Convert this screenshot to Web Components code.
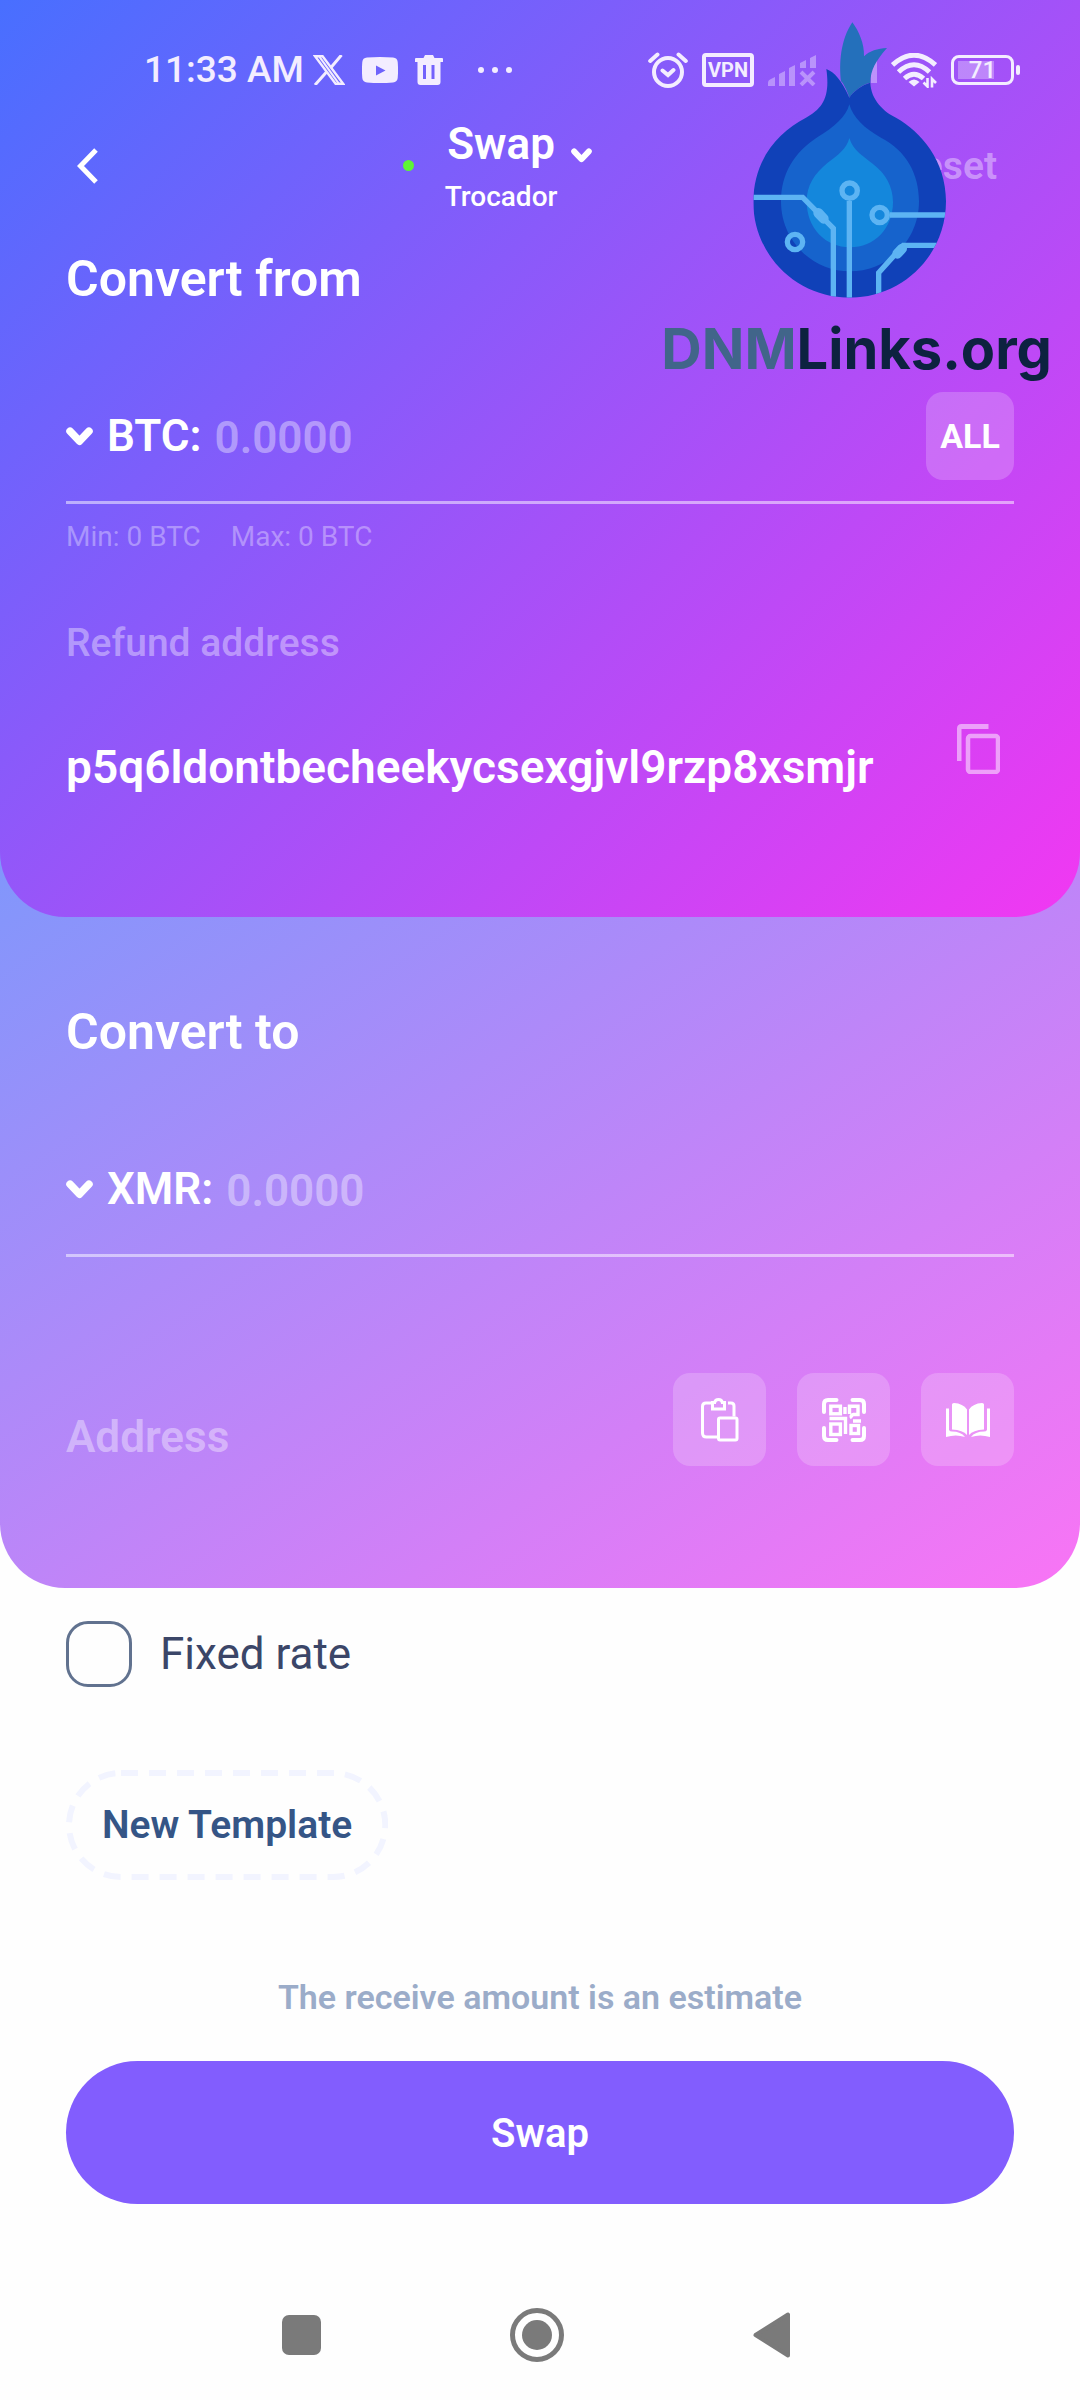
<!DOCTYPE html>
<html lang="en">
<head>
<meta charset="utf-8">
<meta name="viewport" content="width=device-width, initial-scale=1">
<title>Swap</title>
<style>
    :root {
        --gutter: 66px;
        --faint: rgba(255, 255, 255, 0.4);
        --line: rgba(255, 255, 255, 0.5);
        --tile: rgba(255, 255, 255, 0.2);
        --primary: #825dfe;
    }

    body {
        margin: 0;
        position: relative;
        background: #fefefe;
        color: #fff;
        font-family: Roboto, "Liberation Sans", sans-serif;
        font-size: 44px;
        line-height: 52px;
        font-weight: 500;
    }
</style>
</head>
<body>
    <swap-page></swap-page>
    <site-badge></site-badge>

<script>
const ICONS = {
    x: ['32', '30', '<path fill="none" stroke="currentColor" stroke-width="2.4" d="M2 1.2h7.6l20.6 27.6h-7.6z"/><path fill="none" stroke="currentColor" stroke-width="2" d="M6 1.2L26 28.8"/><path fill="none" stroke="currentColor" stroke-width="3" d="M28.5 0L18 12.5M13.5 17L2 30"/>'],
    youtube: ['36', '26', '<path fill="currentColor" fill-rule="evenodd" d="M5 .6Q18-.6 31 .6 35.4 1 35.7 5 36.4 13 35.7 21 35.400 25 31 25.400 18 26.600 5 25.400.6 25 .3 21-.4 13 .3 5 .6 1 5 .6zM14 8.500v10l9.500-5z"/>'],
    trash: ['28', '30', '<path fill="currentColor" fill-rule="evenodd" d="M10 0h8l1.500 3H27q1 0 1 1v3H0V4q0-1 1-1h7.500zM2.500 7h23V27q0 3-3 3h-17q-3 0-3-3zM8 10v14h3V10zm8.500 0v14h3V10z"/>'],
    dots: ['34', '6', '<g fill="currentColor"><circle cx="3" cy="3" r="3"/><circle cx="17" cy="3" r="3"/><circle cx="31" cy="3" r="3"/></g>'],
    alarm: ['40', '36', '<g fill="none" stroke="currentColor" stroke-width="4" stroke-linecap="round"><circle cx="20" cy="20" r="14"/><path d="M14.500 18.500l5.500 4.500 5.500-5M2.200 9L9.500 2.500M37.800 9l-7.300-6.500"/></g>'],
    signal: ['48', '31', '<g fill="currentColor"><path d="M0 31v-3q0-3 3-4l4-2v9zM11 31V19l6-3v15zM21 31V13l6-3v21zM32 13V8l6-3v8zM42 13V3l6-3v13z"/></g><path stroke="currentColor" stroke-width="4" d="M33 17l13 13M46 17L33 30"/>'],
    bar: ['6', '26', '<path fill="currentColor" d="M0 26V3l6-3v26z"/>'],
    wifi: ['46', '35', '<g fill="none" stroke="currentColor" stroke-width="5"><path d="M1.500 12Q23-7.500 44.500 12M7.500 19Q23 4.500 38.500 19M13.500 25.500Q23 17 32.500 25.500"/></g><path fill="currentColor" d="M17.500 29q5.500-5 11 0L23 33.500z"/><path fill="none" stroke="currentColor" stroke-width="2.600" d="M36.500 25v8.500l-4-4M41 34.500V26l4 4"/>'],
    back: ['32', '36', '<path fill="none" stroke="currentColor" stroke-width="5" d="M30 2L14.500 18 30 34"/>'],
    down: ['27', '19', '<path fill="none" stroke="currentColor" stroke-width="7.500" stroke-linecap="round" stroke-linejoin="round" d="M4 4.200l9.500 10 9.500-10"/>'],
    copy: ['43', '50', '<path fill="currentColor" d="M4.500 0H31.500V5H4.500V37H0V4.500Q0 0 4.500 0z"/><rect x="11" y="12" width="30" height="36" rx="2.500" fill="none" stroke="currentColor" stroke-width="4.500"/>'],
    paste: ['38', '44', '<g fill="none" stroke="currentColor" stroke-width="3"><path d="M11 5H5Q1.500 5 1.500 8.500V35q0 4 4 4h11M27 5h3q3 0 3 3v10.500"/><path d="M11.500 4.500v6.500h12V4.500h-2.200q-.6-3-3.800-3t-3.800 3z"/><rect x="17.500" y="20" width="18.500" height="22" rx="1.500"/></g>'],
    scan: ['44', '44', '<g fill="none" stroke="currentColor" stroke-width="4" stroke-linecap="round"><path d="M2 14V6q0-4 4-4h8.500M30.500 2H38q4 0 4 4v8M42 30v8q0 4-4 4h-7.500M14.500 42H6q-4 0-4-4v-8"/></g><g fill="none" stroke="currentColor" stroke-width="3.400"><rect x="8.800" y="8.200" width="9.600" height="7.600"/><path d="M23 9v7M7.500 20.500h16V36M27.500 16V8.200H36v8.300h-4.500q-4 1-1.500 3.500M31 23h8"/><rect x="8.800" y="26" width="9.600" height="10.500"/><rect x="29" y="27.500" width="7.500" height="8"/></g>'],
    book: ['44', '34', '<path fill="currentColor" d="M6 1.500Q6 0 8 0 17 .5 21 6.500V32Q17 27 6 26.500zM38 1.500Q38 0 36 0 27 .5 23 6.500V32q4-5 15-5.500zM0 5.500h3V27q1 1.500 3 1.500 9 0 13 5.500Q10 31 0 34zM44 5.500h-3V27q-1 1.500-3 1.500-9 0-13 5.500 9-3 19 0z"/>'],
    recents: ['39', '40', '<rect width="39" height="40" rx="7" fill="currentColor"/>'],
    home: ['54', '54', '<circle cx="27" cy="27" r="24.500" fill="none" stroke="currentColor" stroke-width="5"/><circle cx="27" cy="27" r="15" fill="currentColor"/>'],
    prev: ['37', '46', '<path fill="currentColor" stroke="currentColor" stroke-width="4" stroke-linejoin="round" d="M35 2.500v41L2.500 23z"/>']
};

// shared by every shadow root
const RESET = `
    button, input {
        margin: 0;
        padding: 0;
        border: 0;
        background: none;
        color: inherit;
        font: inherit;
        outline: none;
        border-radius: 0;
    }
    button { cursor: pointer; }
    h1, h2, p { margin: 0; font: inherit; font-weight: 600; }
`;

class SwapIcon extends HTMLElement {
    constructor() {
        super();
        this.attachShadow({mode: "open"});
    }

    connectedCallback() {
        const [w, h, body] = ICONS[this.getAttribute("name")];
        const width = this.getAttribute("width") || w;
        this.shadowRoot.innerHTML = `
        <style>
            :host { display: block; flex: none; }
            svg { display: block; }
        </style>
        <svg viewBox="0 0 ${w} ${h}" width="${width}" height="${Math.round(h * width / w)}" aria-hidden="true">${body}</svg>
        `;
    }
}

class StatusBar extends HTMLElement {
    constructor() {
        super();
        this.attachShadow({mode: "open"});
    }

    connectedCallback() {
        this.shadowRoot.innerHTML = `
        <style>
            :host {
                display: flex;
                justify-content: space-between;
                padding: 48px 60px 0 144px;
                font-size: 37px;
                line-height: 44px;
                color: #f3edff;
            }
            div { display: flex; align-items: center; }
            .left { gap: 17px; }
            .clock { margin-right: -8px; }
            .more { margin-left: 18px; }
            .right { gap: 14px; }
            .dim { opacity: 0.4; }
            .cell { margin-left: 41px; }
            .vpn {
                box-sizing: border-box;
                width: 52px;
                height: 34px;
                justify-content: center;
                border: 4px solid;
                border-radius: 4px;
                font-size: 20px;
                font-weight: 700;
            }
            .battery { gap: 2px; }
            .level {
                box-sizing: border-box;
                width: 63px;
                height: 30px;
                justify-content: center;
                border: 3px solid;
                border-radius: 8px;
                font-size: 24px;
                background: linear-gradient(rgba(255, 255, 255, 0.3) 0 0) 4px center / 36px 18px no-repeat;
            }
            .nub { width: 4px; height: 10px; border-radius: 2px; background: currentColor; }
        </style>
        <div class="left">
            <span class="clock">11:33 AM</span>
            <swap-icon name="x"></swap-icon>
            <swap-icon name="youtube"></swap-icon>
            <swap-icon name="trash"></swap-icon>
            <swap-icon class="more" name="dots"></swap-icon>
        </div>
        <div class="right">
            <swap-icon name="alarm"></swap-icon>
            <div class="vpn">VPN</div>
            <swap-icon class="dim" name="signal"></swap-icon>
            <swap-icon class="dim cell" name="bar"></swap-icon>
            <swap-icon name="wifi"></swap-icon>
            <div class="battery"><div class="level">71</div><div class="nub"></div></div>
        </div>
        `;
    }
}

class PageHeader extends HTMLElement {
    constructor() {
        super();
        this.attachShadow({mode: "open"});
    }

    connectedCallback() {
        this.shadowRoot.innerHTML = `
        <style>
            ${RESET}
            :host {
                display: flex;
                align-items: center;
                justify-content: space-between;
                padding: 26px var(--gutter) 0;
            }
            .title { display: flex; align-items: center; gap: 31px; }
            .dot { width: 11px; height: 11px; border-radius: 50%; background: #5ef534; }
            .names {
                display: grid;
                grid-template-columns: auto auto;
                justify-items: center;
                column-gap: 14px;
                row-gap: 11px;
            }
            .names swap-icon { align-self: end; padding-bottom: 7px; }
            .provider { font-size: 28px; line-height: 32px; }
            .reset { padding-right: 17px; font-size: 39px; line-height: 44px; font-weight: 600; color: var(--faint); }
        </style>
        <button aria-label="Back"><swap-icon name="back"></swap-icon></button>
        <div class="title">
            <span class="dot"></span>
            <div class="names">
                <h1>Swap</h1>
                <swap-icon name="down" width="21"></swap-icon>
                <span class="provider">Trocador</span>
            </div>
        </div>
        <button class="reset">Reset</button>
        `;
    }
}

class AmountField extends HTMLElement {
    constructor() {
        super();
        this.attachShadow({mode: "open"});
    }

    connectedCallback() {
        const coin = this.getAttribute("coin");
        this.shadowRoot.innerHTML = `
        <style>
            ${RESET}
            :host {
                display: flex;
                align-items: center;
                height: 88px;
                padding-bottom: 21px;
                border-bottom: 3px solid var(--line);
                font-weight: 600;
            }
            .coin { display: flex; align-items: center; gap: 14px; }
            input { flex: 1; min-width: 0; margin-left: 13px; padding-top: 4px; }
            input::placeholder { color: var(--faint); opacity: 1; }
        </style>
        <button class="coin"><swap-icon name="down"></swap-icon><label for="amount">${coin}:</label></button>
        <input id="amount" inputmode="decimal" placeholder="0.0000">
        <slot></slot>
        `;
    }
}

class TileButton extends HTMLElement {
    constructor() {
        super();
        this.attachShadow({mode: "open"});
    }

    connectedCallback() {
        this.shadowRoot.innerHTML = `
        <style>
            ${RESET}
            :host { display: block; flex: none; }
            button {
                display: flex;
                align-items: center;
                justify-content: center;
                width: var(--size, 93px);
                height: var(--size, 93px);
                border-radius: 17px;
                background: var(--tile);
                font-size: 34px;
                line-height: 40px;
                font-weight: 700;
            }
        </style>
        <button aria-label="${this.getAttribute("label")}"><slot></slot></button>
        `;
    }
}

class ExchangeForm extends HTMLElement {
    constructor() {
        super();
        this.attachShadow({mode: "open"});
    }

    connectedCallback() {
        this.shadowRoot.innerHTML = `
        <style>
            ${RESET}
            :host {
                display: block;
                border-radius: 0 0 65px 65px;
                background: linear-gradient(146deg, #3aabff, #f974f5);
            }
            .from {
                border-radius: 0 0 65px 65px;
                background: linear-gradient(135deg, #486fff, #f238f2);
                padding-bottom: 107px;
            }
            .body { padding: 36px var(--gutter) 0; }
            .to { padding: 85px var(--gutter) 122px; }
            h2 { font-size: 50px; line-height: 60px; margin-bottom: 83px; }
            .all { --size: 88px; }
            .limits {
                display: flex;
                gap: 30px;
                margin-top: 17px;
                font-size: 28px;
                line-height: 32px;
                font-weight: 400;
                color: rgba(255, 255, 255, 0.35);
            }
            .caption {
                display: block;
                margin-top: 68px;
                font-size: 39px;
                line-height: 44px;
                color: var(--faint);
            }
            .refund { display: flex; gap: 61px; margin-top: 59px; }
            .refund input { flex: 1; min-width: 0; height: 86px; font-size: 46px; font-weight: 600; }
            .refund button { align-self: flex-start; padding: 0 14px; color: var(--line); }
            .address { display: flex; gap: 31px; margin-top: 116px; }
            .address input { flex: 1; min-width: 0; padding-top: 34px; font-weight: 600; }
            input::placeholder { color: var(--faint); opacity: 1; }
        </style>
        <div class="from">
            <status-bar></status-bar>
            <page-header></page-header>
            <div class="body">
                <h2>Convert from</h2>
                <amount-field coin="BTC"><tile-button class="all" label="All">ALL</tile-button></amount-field>
                <div class="limits"><span>Min: 0 BTC</span><span>Max: 0 BTC</span></div>
                <label class="caption" for="refund">Refund address</label>
                <div class="refund">
                    <input id="refund" value="p5q6ldontbecheekycsexgjvl9rzp8xsmjr">
                    <button aria-label="Copy"><swap-icon name="copy"></swap-icon></button>
                </div>
            </div>
        </div>
        <div class="to">
            <h2>Convert to</h2>
            <amount-field coin="XMR"></amount-field>
            <div class="address">
                <input aria-label="Address" placeholder="Address">
                <tile-button label="Paste"><swap-icon name="paste"></swap-icon></tile-button>
                <tile-button label="Scan QR code"><swap-icon name="scan"></swap-icon></tile-button>
                <tile-button label="Address book"><swap-icon name="book"></swap-icon></tile-button>
            </div>
        </div>
        `;
    }
}

class SwapActions extends HTMLElement {
    constructor() {
        super();
        this.attachShadow({mode: "open"});
    }

    connectedCallback() {
        this.shadowRoot.innerHTML = `
        <style>
            ${RESET}
            :host { display: block; padding: 33px var(--gutter) 0; }
            label {
                display: flex;
                align-items: center;
                gap: 28px;
                font-weight: 400;
                color: #3b4668;
            }
            input {
                appearance: none;
                box-sizing: border-box;
                width: 66px;
                height: 66px;
                border: 3px solid #61728f;
                border-radius: 22px;
            }
            .template {
                position: relative;
                display: block;
                height: 110px;
                margin-top: 83px;
                padding: 0 36px;
                font-size: 39px;
                line-height: 44px;
                font-weight: 600;
                color: #355586;
            }
            .template svg { position: absolute; inset: 0; width: 100%; height: 100%; }
            .template rect {
                x: 3px;
                y: 3px;
                width: calc(100% - 6px);
                height: calc(100% - 6px);
                rx: 52px;
                fill: none;
                stroke: #f2f4ff;
                stroke-width: 6px;
                stroke-dasharray: 17 11;
            }
            .note {
                margin-top: 97px;
                text-align: center;
                font-size: 34px;
                line-height: 40px;
                color: #9bacc9;
            }
            .submit {
                display: block;
                width: 100%;
                height: 143px;
                margin-top: 44px;
                padding-top: 2px;
                border-radius: 72px;
                background: var(--primary);
                font-size: 40px;
                font-weight: 600;
            }
        </style>
        <label><input type="checkbox">Fixed rate</label>
        <button class="template"><svg aria-hidden="true"><rect/></svg>New Template</button>
        <p class="note">The receive amount is an estimate</p>
        <button class="submit">Swap</button>
        `;
    }
}

class SystemNav extends HTMLElement {
    constructor() {
        super();
        this.attachShadow({mode: "open"});
    }

    connectedCallback() {
        this.shadowRoot.innerHTML = `
        <style>
            ${RESET}
            :host {
                display: flex;
                justify-content: center;
                align-items: center;
                gap: 189px;
                height: 130px;
                padding: 66px 8px 0 0;
                color: #7a7a7a;
            }
        </style>
        <button aria-label="Recent apps"><swap-icon name="recents"></swap-icon></button>
        <button aria-label="Home"><swap-icon name="home"></swap-icon></button>
        <button aria-label="Back"><swap-icon name="prev"></swap-icon></button>
        `;
    }
}

class SwapPage extends HTMLElement {
    constructor() {
        super();
        this.attachShadow({mode: "open"});
    }

    connectedCallback() {
        this.shadowRoot.innerHTML = `
        <style>
            :host { display: block; }
        </style>
        <exchange-form></exchange-form>
        <swap-actions></swap-actions>
        <system-nav></system-nav>
        `;
    }
}

// onion logo lying over the top right corner
class SiteBadge extends HTMLElement {
    constructor() {
        super();
        this.attachShadow({mode: "open"});
    }

    connectedCallback() {
        this.shadowRoot.innerHTML = `
        <style>
            :host {
                position: absolute;
                top: 22px;
                right: 28px;
                display: flex;
                flex-direction: column;
                align-items: center;
                gap: 18px;
                pointer-events: none;
                font-family: Inter, "Open Sans", sans-serif;
                font-size: 56px;
                line-height: 66px;
                font-weight: 700;
                color: #0d2240;
            }
            span { color: #41658a; }
        </style>
        <svg viewBox="456 65 621 828" width="207" height="276" aria-hidden="true">
            <clipPath id="bulb"><path d="M676 206C700 215 722 240 745 292 755 275 785 252 808 247 810 300 850 335 885 352 960 395 1035 480 1035 603 1035 765 905 892 746 892 587 892 457 765 457 605 457 480 530 395 615 352 665 325 688 290 676 206Z"/></clipPath>
            <path fill="#2470bb" d="M754 66C775 95 790 130 789 168 805 152 830 144 858 143 825 180 808 210 808 247 785 252 760 270 745 292 738 270 725 245 720 243 714 190 718 120 754 66Z"/>
            <g clip-path="url(#bulb)">
                <rect x="450" y="200" width="600" height="700" fill="#1041b8"/>
                <path fill="#1663cc" d="M745 312C755 350 790 385 840 412 915 450 954 520 954 603 954 720 862 813 747 813 632 813 540 720 540 603 540 520 580 455 650 410 700 380 735 350 745 312Z"/>
                <path fill="#1487dc" d="M745 413C755 450 790 470 815 490 855 520 876 560 876 605 876 685 820 741 747 741 674 741 617 685 617 603 617 555 640 520 680 487 710 465 738 445 745 413Z"/>
                <g fill="none" stroke="#5db4f3" stroke-width="16">
                    <path d="M450 591H605L697 684V900M745 602V900M866 644H1040M1040 735H907L833 817V900"/>
                    <circle cx="746" cy="571" r="23"/>
                    <circle cx="836" cy="644" r="23"/>
                    <circle cx="582" cy="725" r="23"/>
                </g>
                <g stroke="#5db4f3" stroke-width="30" stroke-linecap="round">
                    <path d="M652 638L668 655M903 745L889 760"/>
                </g>
            </g>
        </svg>
        <div><span>DNM</span>Links.org</div>
        `;
    }
}

customElements.define("swap-icon", SwapIcon);
customElements.define("status-bar", StatusBar);
customElements.define("page-header", PageHeader);
customElements.define("amount-field", AmountField);
customElements.define("tile-button", TileButton);
customElements.define("exchange-form", ExchangeForm);
customElements.define("swap-actions", SwapActions);
customElements.define("system-nav", SystemNav);
customElements.define("swap-page", SwapPage);
customElements.define("site-badge", SiteBadge);
</script>
</body>
</html>
